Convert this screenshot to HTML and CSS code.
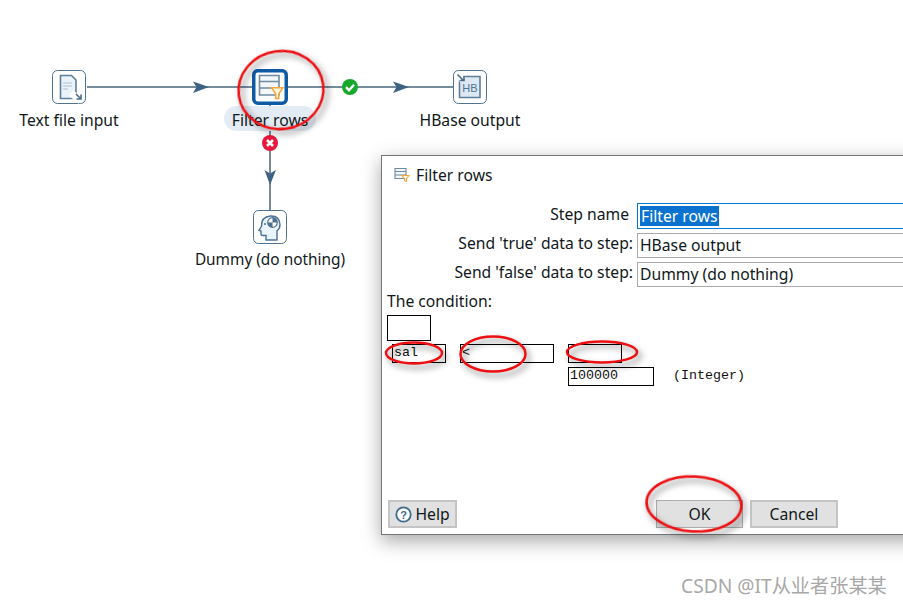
FILE: index.html
```html
<!DOCTYPE html>
<html lang="en">
<head>
<meta charset="utf-8">
<title>Filter rows</title>
<link rel="stylesheet" href="styles.css">
</head>
<body>
<main class="canvas">
  <svg class="layer" width="903" height="605" viewBox="0 0 903 605">
    <g class="edge">
      <line x1="87" y1="87" x2="252" y2="87"/>
      <line x1="288" y1="87" x2="453" y2="87"/>
      <line x1="270" y1="105" x2="270" y2="210"/>
    </g>
    <g class="arrow">
      <polygon points="193,81.500 209,87 193,93 196.500,87"/>
      <polygon points="393,81.500 409,87 393,93 396.500,87"/>
      <polygon points="264.500,170 270,185 276,170 270,173.500"/>
    </g>
    <circle cx="350" cy="87" r="8" fill="#17a92c"/>
    <path d="M346 87.200l3 3 5-5.400" fill="none" stroke="#fff" stroke-width="2.400"/>
    <circle cx="270" cy="143" r="8" fill="#e8173c"/>
    <path d="M267 140l6 6M273 140l-6 6" fill="none" stroke="#fff" stroke-width="2.600"/>
  </svg>

  <div class="node node-text">
    <svg class="step" width="34" height="34" viewBox="0 0 34 34">
      <rect class="step-frame" x=".5" y=".5" width="33" height="33" rx="5"/>
      <path d="M8.500 5.500h11l4.500 4.500v18.500H8.500z" fill="#eaf3fa" stroke="#5d7f9b" stroke-width="1.600"/>
      <path d="M11 13h9M11 16h9M11 19h5" stroke="#a9bfd0" stroke-width="1.200"/>
      <path d="M19 23l10 8" stroke="#fff" stroke-width="7"/>
      <path d="M24 24l5 5M29 24.500v4.500h-4.500" fill="none" stroke="#4a6c88" stroke-width="1.600"/>
    </svg>
    <span class="node-label">Text file input</span>
  </div>

  <div class="node node-filter">
    <svg class="step" width="36" height="36" viewBox="0 0 36 36">
      <rect x="1.750" y="1.750" width="32.500" height="32.500" rx="4" fill="#fff" stroke="#0f5ba3" stroke-width="3.500"/>
      <path d="M7.500 6.500h19.500v19.500H7.500zM7.500 12.500h19.500M7.500 19h19.500" fill="#f3f7fa" stroke="#6f8ba1" stroke-width="1.600"/>
      <path d="M19.500 18.750h11.500l-4.250 6v4.750h-3v-4.750z" fill="#fff6e4" stroke="#f6a93b" stroke-width="1.500"/>
    </svg>
    <span class="node-label selected">Filter rows</span>
  </div>

  <div class="node node-hbase">
    <svg class="step" width="34" height="34" viewBox="0 0 34 34">
      <rect class="step-frame" x=".5" y=".5" width="33" height="33" rx="5"/>
      <path d="M9 6.500h18v21H6.500V9z" fill="#dce8f2" stroke="#5d7f9b" stroke-width="1.600"/>
      <text class="hb-text" x="17" y="21.500">HB</text>
      <path d="M4 4l6 6" stroke="#fff" stroke-width="7"/>
      <path d="M4.500 4.500l6 6M11 6v4.500H6.500" fill="none" stroke="#4a6c88" stroke-width="1.600"/>
    </svg>
    <span class="node-label">HBase output</span>
  </div>

  <div class="node node-dummy">
    <svg class="step" width="34" height="34" viewBox="0 0 34 34">
      <rect class="step-frame" x=".5" y=".5" width="33" height="33" rx="5"/>
      <path d="M13 30v-4.500h-3.500q-1.500 0-1.500-1.500v-3l-2-.7 2.500-4q-.5-9.300 9-10.300q9-.3 9.500 8.500 0 4-3 6.500V30z" fill="#eaf4fb" stroke="#4d7190" stroke-width="1.400"/>
      <circle cx="19.500" cy="12.500" r="4.800" fill="#fff" stroke="#4d7190" stroke-width="1.200"/>
      <path d="M19.500 12.500V7.700a4.800 4.800 0 0 1 4.800 4.800zM19.500 12.500v4.800a4.800 4.800 0 0 1-4.800-4.800z" fill="#4d7190"/>
      <circle cx="12" cy="14" r="1" fill="#4d7190"/>
    </svg>
    <span class="node-label node-label-wide">Dummy (do nothing)</span>
  </div>

  <section class="dialog">
    <header class="dialog-title">
      <svg width="16" height="16" viewBox="0 0 16 16">
        <path d="M1 1.500h11v10H1zM1 4.500h11M1 8h11" fill="#f3f7fa" stroke="#6f8ba1" stroke-width="1.100"/>
        <path d="M8 8.500h7l-2.500 3v3l-2-1v-2z" fill="#fff" stroke="#f6a93b" stroke-width="1.100"/>
      </svg>
      <span>Filter rows</span>
    </header>
    <div class="form">
      <label class="form-label form-label-step">Step name</label>
      <div class="field field-active"><span class="selection">Filter rows</span></div>
      <label class="form-label">Send 'true' data to step:</label>
      <div class="field">HBase output</div>
      <label class="form-label">Send 'false' data to step:</label>
      <div class="field">Dummy (do nothing)</div>
    </div>
    <div class="condition-title">The condition:</div>
    <div class="condition">
      <div class="cond-box cond-root"></div>
      <div class="cond-box cond-field">sal</div>
      <div class="cond-box cond-op">&lt;</div>
      <div class="cond-box cond-right"></div>
      <div class="cond-box cond-value">100000</div>
      <div class="cond-type">(Integer)</div>
    </div>
    <footer class="dialog-buttons">
      <button class="btn btn-help" type="button">
        <svg width="17" height="17" viewBox="0 0 17 17">
          <circle cx="8.500" cy="8.500" r="7.200" fill="#fff" stroke="#3f6b8e" stroke-width="1.800"/>
          <text class="help-mark" x="8.500" y="12.500">?</text>
        </svg>
        <span>Help</span>
      </button>
      <button class="btn btn-ok" type="button">OK</button>
      <button class="btn btn-cancel" type="button">Cancel</button>
    </footer>
  </section>

  <svg class="layer annotations" width="903" height="605" viewBox="0 0 903 605">
    <ellipse cx="281" cy="90" rx="42.500" ry="39" transform="rotate(-8 281 90)"/>
    <ellipse cx="414" cy="353" rx="28" ry="10.500"/>
    <ellipse cx="493" cy="354" rx="32.500" ry="17.500"/>
    <ellipse cx="602" cy="352" rx="35" ry="10.500"/>
    <ellipse cx="694" cy="504" rx="47.500" ry="27.500" transform="rotate(3 694 504)"/>
  </svg>

  <div class="watermark">CSDN @IT从业者张某某</div>
</main>
</body>
</html>
```
FILE: styles.css
```css
html, body {
  margin: 0;
  padding: 0;
  background: #fff;
}

.canvas {
  position: relative;
  width: 903px;
  height: 605px;
  overflow: hidden;
  font-family: "Noto Sans", "Noto Sans CJK SC", sans-serif;
  font-size: 15.700px;
  color: #101820;
}

.layer {
  position: absolute;
  left: 0;
  top: 0;
}

.annotations {
  pointer-events: none;
}

.annotations ellipse {
  fill: none;
  stroke: #ee0f12;
  stroke-width: 2.500;
  filter: drop-shadow(3px 4px 3px rgba(0, 0, 0, 0.5));
}

.edge line {
  stroke: #47667f;
  stroke-width: 1.500;
}

.arrow polygon {
  fill: #3f6383;
}

.node {
  position: absolute;
  width: 200px;
  display: flex;
  flex-direction: column;
  align-items: center;
}

.node-text { left: -31px; top: 70px; }
.node-filter { left: 170px; top: 69px; }
.node-hbase { left: 370px; top: 70px; }
.node-dummy { left: 170px; top: 210px; }

.step {
  display: block;
  background: #fff;
}

.step-frame {
  fill: #fff;
  stroke: #4f7390;
  stroke-width: 1;
}

.node-label {
  margin-top: 5px;
  line-height: 22px;
  white-space: nowrap;
}

.node-label-wide {
  font-size: 15.400px;
}

.node-label.selected {
  margin-top: 1px;
  padding: 3px 5px 0;
  width: 82px;
  text-align: center;
  background: #e3ebf4;
  border-radius: 13px;
}

.hb-text {
  font-family: "Liberation Sans", sans-serif;
  font-size: 11px;
  fill: #4f7390;
  text-anchor: middle;
}

.help-mark {
  font-family: "Liberation Sans", sans-serif;
  font-size: 11px;
  font-weight: 700;
  fill: #3f6b8e;
  text-anchor: middle;
}

.dialog {
  position: absolute;
  left: 381px;
  top: 155px;
  width: 620px;
  height: 380px;
  box-sizing: border-box;
  display: flex;
  flex-direction: column;
  background: #fff;
  border: 1px solid #757575;
  box-shadow: 0 6px 18px rgba(0, 0, 0, 0.35);
}

.dialog-title {
  display: flex;
  align-items: center;
  gap: 6px;
  height: 22px;
  margin-top: 8px;
  padding-left: 12px;
}

.form {
  display: grid;
  grid-template-columns: 251px 1fr;
  column-gap: 4px;
  row-gap: 4px;
  margin-top: 17px;
}

.form-label {
  text-align: right;
  line-height: 20px;
  white-space: nowrap;
}

.form-label-step {
  padding-right: 4px;
  line-height: 22px;
}

.field {
  box-sizing: border-box;
  height: 25px;
  line-height: 23px;
  padding-left: 2px;
  border: 1px solid #a9a9a9;
  white-space: nowrap;
}

.field-active {
  height: 26px;
  border-color: #0078d7;
  padding-top: 1px;
}

.selection {
  display: inline-block;
  line-height: 20px;
  padding: 0 1px;
  background: #0a72cf;
  color: #fff;
}

.condition-title {
  margin-top: 3px;
  padding-left: 5px;
  line-height: 22px;
}

.condition {
  position: relative;
  flex: 1;
  font-family: "Liberation Mono", monospace;
  font-size: 13.330px;
  color: #111;
}

.cond-box {
  position: absolute;
  box-sizing: border-box;
  height: 19px;
  padding-left: 1px;
  line-height: 15px;
  border: 1px solid #000;
}

.cond-root { left: 5px; top: 3px; width: 44px; height: 26px; }
.cond-field { left: 10px; top: 32px; width: 54px; }
.cond-op { left: 78px; top: 32px; width: 94px; }
.cond-right { left: 186px; top: 32px; width: 54px; }
.cond-value { left: 186px; top: 55px; width: 86px; }

.cond-type {
  position: absolute;
  left: 291px;
  top: 56px;
  line-height: 15px;
  white-space: nowrap;
}

.dialog-buttons {
  display: flex;
  height: 28px;
  margin-bottom: 6px;
  padding-left: 6px;
}

.btn {
  box-sizing: border-box;
  height: 28px;
  padding: 0;
  font: inherit;
  color: inherit;
  background: #e1e1e1;
  border: 2px solid #c4c4c4;
  border-radius: 0;
}

.btn-help {
  display: flex;
  align-items: center;
  justify-content: center;
  gap: 3px;
  width: 69px;
}

.btn-ok {
  width: 87px;
  margin-left: 199px;
  border-width: 1px;
  border-color: #adadad;
}

.btn-cancel {
  width: 88px;
  margin-left: 7px;
}

.watermark {
  position: absolute;
  left: 681px;
  top: 574px;
  font-size: 19.200px;
  line-height: 24px;
  color: #a8a8a8;
  white-space: nowrap;
}
```
